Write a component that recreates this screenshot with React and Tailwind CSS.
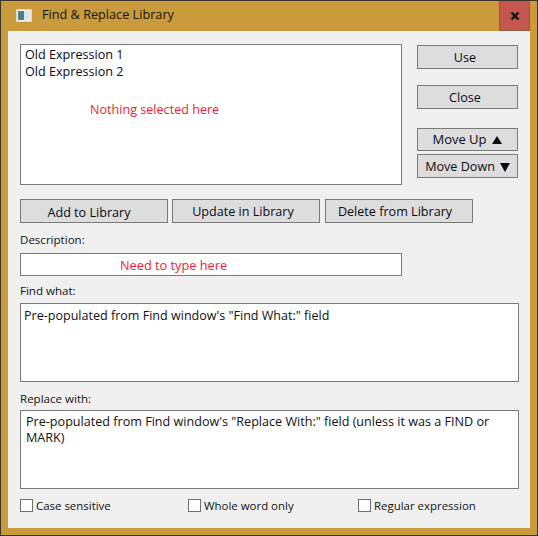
import React from "react";

function Btn({ className = "", children }) {
  return (
    <div className={"flex items-center justify-center border border-[#7a7a7a] bg-[#dddddd] text-[12.6px] leading-none text-[#0a0a14] " + className}>
      {children}
    </div>
  );
}

function Check({ label, className = "" }) {
  return (
    <div className={"flex items-center gap-[3px] " + className}>
      <div className="h-[13px] w-[13px] border border-[#6f6f6f] bg-white" />
      <span className="text-[11.45px] leading-none text-[#111]">{label}</span>
    </div>
  );
}

export default function App() {
  return (
    <div className="h-[536px] w-[538px] overflow-hidden border border-[#3a3328] bg-[#c99b3c] font-['Open_Sans','Noto_Sans',sans-serif]">
      <div className="flex h-[30px] items-start">
        <svg width="16" height="13" viewBox="0 0 16 13" className="ml-[15px] mt-[8px]">
          <rect x="0.5" y="0.5" width="15" height="12" fill="#f4f3ee" stroke="#d9d4c4" />
          <rect x="2" y="2" width="6" height="9" fill="#4f7f86" />
          <rect x="8" y="2" width="6" height="9" fill="#dfe6e4" />
        </svg>
        <div className="ml-[10px] mt-[5px] text-[12.7px] leading-[17px] text-[#1a1408]">Find &amp; Replace Library</div>
        <div className="ml-auto mr-[7px] flex h-[30px] w-[31px] items-center justify-center border-x border-b border-[#8d5a3c] bg-[#c4584e]">
          <svg width="10" height="10" viewBox="0 0 10 10">
            <path d="M1.5 1.5L8.5 8.5M8.5 1.5L1.5 8.5" stroke="#111" strokeWidth="2.4" />
          </svg>
        </div>
      </div>

      <div className="ml-[7px] flex h-[497px] w-[522px] flex-col bg-[#f0f0f0] px-[12px] pt-[13px]">
        <div className="flex">
          <div className="flex h-[141px] w-[382px] flex-col border border-[#7a7a7a] bg-white pl-[4px] pt-[1px] text-[12.6px] leading-[17px] text-[#0a0a14]">
            <div>Old Expression 1</div>
            <div>Old Expression 2</div>
            <div className="ml-[65px] mt-[21px] text-[#f01c34]">Nothing selected here</div>
          </div>
          <div className="ml-[15px] flex w-[101px] flex-col pt-[1px]">
            <Btn className="h-[24px] border-[#5b8db3] bg-[#dbe6ef] pr-[5px] pt-[2px]">Use</Btn>
            <Btn className="mt-[16px] h-[24px] pr-[5px] pt-[2px]">Close</Btn>
            <Btn className="mt-[19px] h-[23px] pr-[1px] text-[13px]">
              Move Up
              <svg width="10" height="8" viewBox="0 0 10 8" className="ml-[5px]"><path d="M5 0L10 8H0Z" fill="#0a0a14" /></svg>
            </Btn>
            <Btn className="mt-[3px] h-[24px] pt-[2px]">
              Move Down
              <svg width="10" height="9" viewBox="0 0 10 9" className="ml-[5px]"><path d="M0 0H10L5 9Z" fill="#0a0a14" /></svg>
            </Btn>
          </div>
        </div>

        <div className="mt-[14px] flex">
          <Btn className="h-[24px] w-[148px] pr-[10px] pt-[4px]">Add to Library</Btn>
          <Btn className="ml-[4px] h-[24px] w-[148px] pr-[6px] pt-[2px]">Update in Library</Btn>
          <Btn className="ml-[5px] h-[24px] w-[148px] pr-[8px] pt-[2px]">Delete from Library</Btn>
        </div>

        <div className="mt-[8px] text-[11.55px] leading-[17px] text-[#111]">Description:</div>
        <div className="mt-[5px] flex h-[23px] w-[382px] items-center border border-[#7a7a7a] bg-white pl-[99px] pt-[1px] text-[12.75px] leading-none text-[#f01c34]">
          Need to type here
        </div>

        <div className="mt-[6px] text-[11.55px] leading-[17px] text-[#111]">Find what:</div>
        <div className="mt-[4px] h-[79px] w-[499px] border border-[#7a7a7a] bg-white pl-[3px] pt-[4px] text-[12.55px] leading-[16px] text-[#111]">
          Pre-populated from Find window's "Find What:" field
        </div>

        <div className="mt-[8px] text-[11.55px] leading-[17px] text-[#111]">Replace with:</div>
        <div className="mt-[3px] h-[79px] w-[499px] border border-[#7a7a7a] bg-white pl-[5px] pr-[8px] pt-[3px] text-[12.6px] leading-[16px] text-[#111]">
          Pre-populated from Find window's "Replace With:" field (unless it was a FIND or MARK)
        </div>

        <div className="mt-[10px] flex">
          <Check label="Case sensitive" className="w-[168px]" />
          <Check label="Whole word only" className="w-[170px]" />
          <Check label="Regular expression" />
        </div>
      </div>
    </div>
  );
}
